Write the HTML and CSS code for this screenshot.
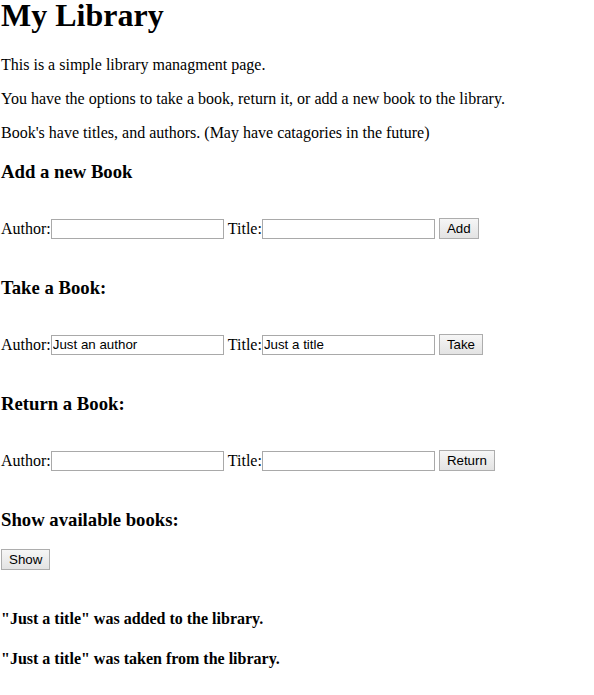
FILE: index.html
```html
<!DOCTYPE html>
<html>
<head>
<meta charset="utf-8">
<title>My Library</title>
<link rel="stylesheet" href="styles.css">
</head>
<body>
<h1 class="title">My Library</h1>
<p class="intro">This is a simple library managment page.</p>
<p class="intro">You have the options to take a book, return it, or add a new book to the library.</p>
<p class="intro">Book's have titles, and authors. (May have catagories in the future)</p>

<h3 class="section">Add a new Book</h3>
<div class="row">
  <label class="lbl">Author:</label><input class="field" type="text"><label class="lbl gap">Title:</label><input class="field" type="text"><button class="btn">Add</button>
</div>

<h3 class="section">Take a Book:</h3>
<div class="row">
  <label class="lbl">Author:</label><input class="field" type="text" value="Just an author"><label class="lbl gap">Title:</label><input class="field" type="text" value="Just a title"><button class="btn">Take</button>
</div>

<h3 class="section">Return a Book:</h3>
<div class="row">
  <label class="lbl">Author:</label><input class="field" type="text"><label class="lbl gap">Title:</label><input class="field" type="text"><button class="btn">Return</button>
</div>

<h3 class="section show-head">Show available books:</h3>
<div class="show-row"><button class="btn show-btn">Show</button></div>

<h4 class="msg first">"Just a title" was added to the library.</h4>
<h4 class="msg">"Just a title" was taken from the library.</h4>
</body>
</html>
```
FILE: styles.css
```css
html, body {
  background: #fff;
}
body {
  margin: 0;
  padding: 0 0 0 1px;
  font-family: "Liberation Serif", "Times New Roman", serif;
  font-size: 16px;
  color: #000;
}
.title {
  font-size: 32px;
  font-weight: bold;
  margin: -3px 0 22px 0;
  line-height: normal;
}
.intro {
  margin: 16px 0;
}
.section {
  font-size: 18.72px;
  font-weight: bold;
  margin: 18.72px 0;
}
.row {
  display: flex;
  align-items: center;
  margin: 36px 0 38px 0;
  height: 20px;
}
.lbl {
  line-height: 20px;
}
.gap {
  margin-left: 4px;
}
.field {
  box-sizing: border-box;
  width: 173px;
  height: 20px;
  margin: 0;
  padding: 1px 1px;
  border: 1px solid #a9a9a9;
  font-family: "Liberation Sans", Arial, sans-serif;
  font-size: 13.33px;
  color: #000;
  background: #fff;
}
.btn {
  box-sizing: border-box;
  height: 21px;
  margin: 0 0 0 4px;
  padding: 1px 7px;
  border: 1px solid #adadad;
  border-radius: 0;
  background: linear-gradient(#f6f6f6, #e3e3e3);
  font-family: "Liberation Sans", Arial, sans-serif;
  font-size: 13.33px;
  color: #000;
}
.show-row {
  display: flex;
}
.show-btn {
  margin: 0;
}
.msg {
  font-size: 16px;
  font-weight: bold;
  margin: 21.28px 0;
}
.first {
  margin-top: 40px;
}
```
